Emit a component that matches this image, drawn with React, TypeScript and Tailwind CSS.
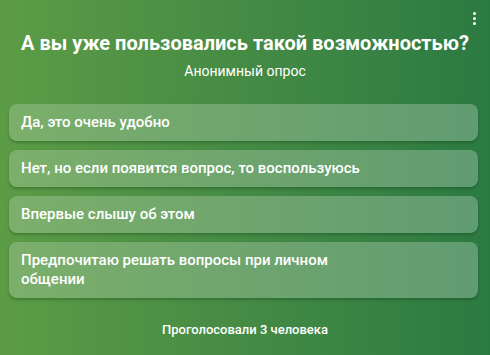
const options = [
  'Да, это очень удобно',
  'Нет, но если появится вопрос, то воспользуюсь',
  'Впервые слышу об этом',
  'Предпочитаю решать вопросы при личном общении',
];

export default function App() {
  return (
    <div
      className="relative h-[355px] w-[490px] overflow-hidden bg-gradient-to-r from-[#5c9c46] to-[#2b7a42] text-white"
      style={{ fontFamily: 'Roboto, "Noto Sans", sans-serif' }}
    >
      <div className="absolute right-[14px] top-[12px] flex flex-col gap-[2px]">
        <span className="h-[3px] w-[3px] rounded-full bg-white" />
        <span className="h-[3px] w-[3px] rounded-full bg-white" />
        <span className="h-[3px] w-[3px] rounded-full bg-white" />
      </div>
      <div className="flex flex-col items-center pt-[30px]">
        <h1 className="text-[20px] font-bold leading-[26px]">
          А вы уже пользовались такой возможностью?
        </h1>
        <p className="mt-[6px] text-[14px] leading-[18px]">Анонимный опрос</p>
      </div>
      <div className="mt-[24px] flex flex-col gap-[9px] pl-[9px] pr-[12px]">
        {options.map((o) => (
          <div
            key={o}
            className="rounded-[8px] bg-gradient-to-r from-white/20 to-white/25 px-[12px] py-[9px] text-[15px] font-medium leading-[19px] shadow-[0_2px_3px_rgba(0,40,10,0.25)]"
          >
            <span className="block max-w-[340px]">{o}</span>
          </div>
        ))}
      </div>
      <p className="mt-[24px] text-center text-[13px] font-medium leading-[16px]">
        Проголосовали 3 человека
      </p>
    </div>
  );
}
